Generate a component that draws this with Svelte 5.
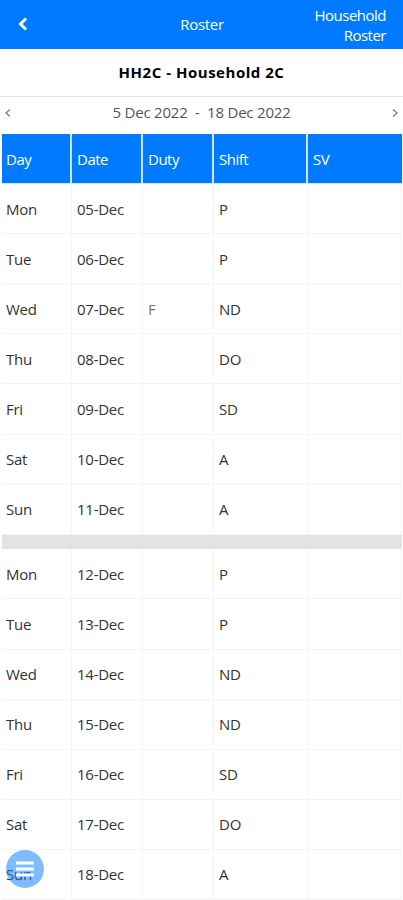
<script>
  const title = "HH2C - Household 2C";
  const range = { from: "5 Dec 2022", to: "18 Dec 2022" };

  const columns = ["Day", "Date", "Duty", "Shift", "SV"];

  const weeks = [
    [
      { day: "Mon", date: "05-Dec", shift: "P" },
      { day: "Tue", date: "06-Dec", shift: "P" },
      { day: "Wed", date: "07-Dec", duty: "F", shift: "ND" },
      { day: "Thu", date: "08-Dec", shift: "DO" },
      { day: "Fri", date: "09-Dec", shift: "SD" },
      { day: "Sat", date: "10-Dec", shift: "A" },
      { day: "Sun", date: "11-Dec", shift: "A" },
    ],
    [
      { day: "Mon", date: "12-Dec", shift: "P" },
      { day: "Tue", date: "13-Dec", shift: "P" },
      { day: "Wed", date: "14-Dec", shift: "ND" },
      { day: "Thu", date: "15-Dec", shift: "ND" },
      { day: "Fri", date: "16-Dec", shift: "SD" },
      { day: "Sat", date: "17-Dec", shift: "DO" },
      { day: "Sun", date: "18-Dec", shift: "A" },
    ],
  ];
</script>

<div class="page">
  <header class="navbar">
    <button class="back" aria-label="Back">
      <svg width="10" height="14" viewBox="0 0 10 14">
        <path d="M8 1.5 2.5 7 8 12.5" fill="none" stroke="#fff" stroke-width="3" />
      </svg>
    </button>
    <span class="navbar-title">Roster</span>
    <span class="navbar-link">Household<br />Roster</span>
  </header>

  <h1>{title}</h1>

  <div class="period">
    <button aria-label="Previous">
      <svg width="6" height="8" viewBox="0 0 6 8">
        <path d="M5 .5 1 4l4 3.5" fill="none" stroke="#777" stroke-width="1.2" />
      </svg>
    </button>
    <span class="dates">{range.from}&nbsp; -&nbsp; {range.to}</span>
    <button aria-label="Next">
      <svg width="6" height="8" viewBox="0 0 6 8">
        <path d="M1 .5 5 4 1 7.5" fill="none" stroke="#777" stroke-width="1.2" />
      </svg>
    </button>
  </div>

  <div class="roster">
    <div class="row head">
      {#each columns as column}
        <div class="cell">{column}</div>
      {/each}
    </div>
    {#each weeks as week, i}
      {#if i > 0}
        <div class="divider"></div>
      {/if}
      {#each week as entry}
        <div class="row">
          <div class="cell">{entry.day}</div>
          <div class="cell">{entry.date}</div>
          <div class="cell duty">{entry.duty ?? ""}</div>
          <div class="cell">{entry.shift}</div>
          <div class="cell"></div>
        </div>
      {/each}
    {/each}
  </div>

  <button class="menu" aria-label="Menu">
    <svg width="18" height="16" viewBox="0 0 18 16">
      <path d="M0 2h18M0 8h18M0 14h18" stroke="#fff" stroke-width="3" />
    </svg>
  </button>
</div>

<style>
  :global(body) {
    background: #fff;
  }

  .page {
    position: relative;
    height: 900px;
    overflow: hidden;
    font-family: "Open Sans", "Noto Sans", sans-serif;
    font-size: 15px;
    color: #333;
  }

  button {
    display: flex;
    padding: 0;
    border: 0;
    background: none;
  }

  .navbar {
    display: grid;
    grid-template-columns: 1fr auto 1fr;
    align-items: center;
    height: 49px;
    box-sizing: border-box;
    padding: 0 17px 2px 18px;
    background: #007aff;
    color: #fff;
    letter-spacing: -0.5px;
  }

  .navbar-title {
    letter-spacing: -0.3px;
  }

  .navbar-link {
    text-align: right;
    line-height: 20px;
    padding-top: 2px;
  }

  h1 {
    margin: 0;
    height: 47px;
    line-height: 47px;
    border-bottom: 1px solid #e4e4e4;
    text-align: center;
    font-size: 15px;
    font-weight: 700;
    letter-spacing: 0.52px;
    color: #000;
  }

  .period {
    display: flex;
    align-items: center;
    justify-content: space-between;
    height: 37px;
    box-sizing: border-box;
    padding: 0 5px 6px;
  }

  .dates {
    padding-bottom: 1px;
    color: #555;
    letter-spacing: -0.2px;
  }

  .roster {
    margin: 0 1px 0 2px;
  }

  .row {
    display: grid;
    grid-template-columns: 70px 71px 71px 94px 1fr;
    height: 50.1px;
  }

  .cell {
    display: flex;
    align-items: center;
    box-sizing: border-box;
    padding: 0 4px 0 5px;
    border-right: 1px solid #f4f4f4;
    border-bottom: 1px solid #f4f4f4;
    letter-spacing: -0.25px;
  }

  .cell:first-child {
    padding-left: 4px;
  }

  .duty {
    color: #777;
  }

  .head .cell {
    border-right: 2px solid #cfe4ff;
    border-bottom: 1px solid #cfe4ff;
    background: #007aff;
    color: #fff;
    letter-spacing: -0.5px;
  }

  .head .cell:last-child {
    border-right: 0;
  }

  .divider {
    height: 14.6px;
    background: #e3e3e3;
  }

  .menu {
    position: absolute;
    left: 6px;
    bottom: 12px;
    width: 38px;
    height: 38px;
    align-items: center;
    justify-content: center;
    border-radius: 50%;
    background: rgba(0, 122, 255, 0.5);
  }
</style>
